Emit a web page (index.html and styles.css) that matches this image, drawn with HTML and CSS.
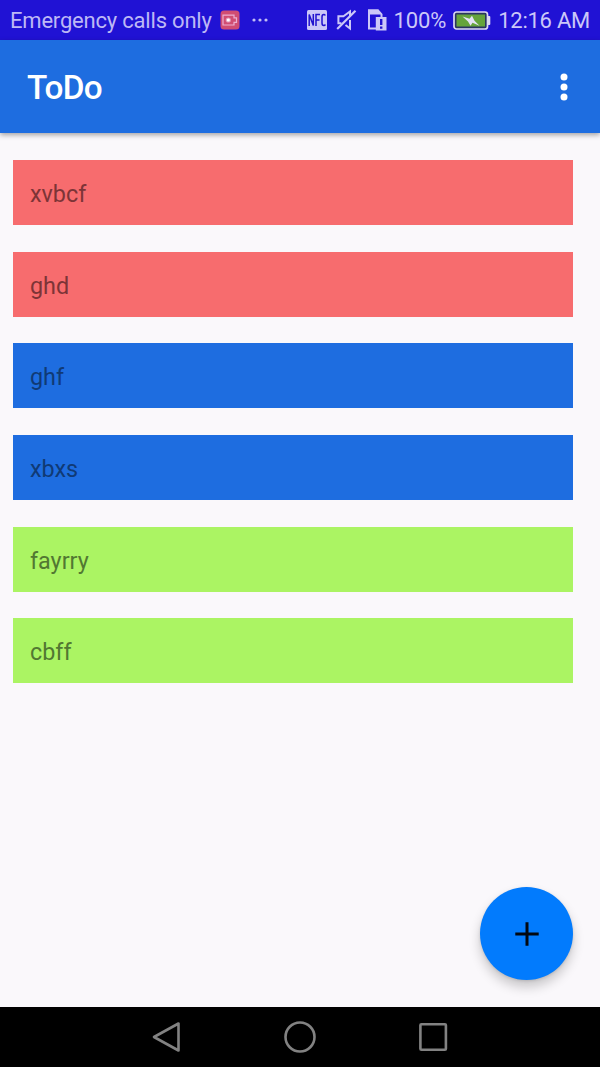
FILE: index.html
```html
<!DOCTYPE html>
<html lang="en">
<head>
<meta charset="utf-8">
<title>ToDo</title>
<link rel="stylesheet" href="styles.css">
</head>
<body>
<div class="screen">
  <div class="status-bar">
    <span class="carrier">Emergency calls only</span>
    <svg class="recorder" width="20" height="20" viewBox="0 0 20 20">
      <rect x=".5" y=".5" width="19" height="19" rx="3.5" fill="#d14d72"/>
      <path d="M3 5.2h11v2.6h2.5v4.6H14V15H3z" fill="none" stroke="#edafd0" stroke-width="1.2"/>
      <circle cx="8.3" cy="10" r="2.6" fill="#e29abb"/>
      <circle cx="8.3" cy="10" r="1.6" fill="#fff"/>
    </svg>
    <svg class="more" width="17" height="4" viewBox="0 0 17 4" fill="#c2bdf6">
      <circle cx="2" cy="2" r="1.6"/><circle cx="8" cy="2" r="1.6"/><circle cx="14" cy="2" r="1.6"/>
    </svg>
    <div class="indicators">
      <svg class="nfc" width="20" height="20" viewBox="0 0 20 20">
        <rect width="20" height="20" rx="1.5" fill="#cbc7f8"/>
        <path d="M2.2 16V4.5L6.3 15.5V4M9 16V4.6h4M9 10h3.5M18.3 5.5Q17.8 4.5 16.8 4.5Q15 4.5 15 7v6q0 2.5 1.8 2.5q1.2 0 1.5-1" fill="none" stroke="#2012ce" stroke-width="1.5"/>
      </svg>
      <svg class="muted" width="21" height="22" viewBox="0 0 21 22" fill="none" stroke="#cbc7f8" stroke-width="2">
        <path d="M8 7.2H2.4v7h3M7.5 7.2L14 2.5v4.5M14 11v8.5l-4.5-3.5"/>
        <path d="M1.2 20L19.5 1.7" stroke-width="2.2"/>
      </svg>
      <svg class="sim" width="20" height="22" viewBox="0 0 20 22">
        <path d="M9 19.4H2V1.5h9.5" fill="none" stroke="#cbc7f8" stroke-width="2"/>
        <path d="M1 .6h10.5L15.5 5v4h-2V5.5H1zM8.8 8H19.5v13.5H8.8z" fill="#cbc7f8"/>
        <path d="M13 10h2.4v6H13zM13 17.5h2.4v2.2H13z" fill="#2012ce"/>
      </svg>
      <span class="percent">100%</span>
      <svg class="battery" width="38" height="19" viewBox="0 0 38 19">
        <rect x="1" y="1" width="33.5" height="17" rx="2.5" fill="#2a3560" stroke="#dcdaf2" stroke-width="1.7"/>
        <rect x="3.5" y="3.5" width="28.5" height="12" fill="#65a43b"/>
        <path d="M35 5h1.3q1 0 1 1v7q0 1-1 1H35z" fill="#dcdaf2"/>
        <path d="M9.5 5.5l7 2.2 2.5-3 2.5 5 5 5-7-3-2 3-2.5-4.3z" fill="#e4e3f4"/>
      </svg>
      <span class="clock">12:16 AM</span>
    </div>
  </div>
  <header class="app-bar">
    <h1 class="title">ToDo</h1>
    <svg class="menu" width="8" height="28" viewBox="0 0 8 28" fill="#fff">
      <circle cx="4" cy="4" r="3.5"/><circle cx="4" cy="14" r="3.5"/><circle cx="4" cy="24" r="3.5"/>
    </svg>
  </header>
  <main class="content">
    <ul class="list">
      <li class="item high">xvbcf</li>
      <li class="item high">ghd</li>
      <li class="item medium">ghf</li>
      <li class="item medium">xbxs</li>
      <li class="item low">fayrry</li>
      <li class="item low">cbff</li>
    </ul>
    <button class="fab" aria-label="Add">
      <svg width="24" height="24" viewBox="0 0 24 24"><path d="M12 .3v23.4M.3 12h23.4" stroke="#020810" stroke-width="3"/></svg>
    </button>
  </main>
  <nav class="nav-bar">
    <svg width="32" height="34" viewBox="0 0 32 34"><path d="M27.5 3.5v27L3 17z"/></svg>
    <svg width="32" height="34" viewBox="0 0 32 34"><circle cx="16" cy="17" r="14.5"/></svg>
    <svg width="32" height="34" viewBox="0 0 32 34"><rect x="3.4" y="4.2" width="25.5" height="25.5" rx="1"/></svg>
  </nav>
</div>
</body>
</html>
```
FILE: styles.css
```css
* { box-sizing: border-box; }
body { margin: 0; font-family: Roboto, sans-serif; }
svg { display: block; flex: none; }

.screen {
  width: 600px;
  height: 1067px;
  display: flex;
  flex-direction: column;
  overflow: hidden;
  background: #faf8fb;
}

.status-bar {
  flex: none;
  height: 40px;
  padding: 0 10px;
  display: flex;
  align-items: center;
  background: #2012d4;
  color: #bdb8f5;
  font-size: 22px;
  line-height: 40px;
  white-space: nowrap;
}
.carrier { width: 210px; padding-top: 2px; letter-spacing: -.2px; }
.more { margin-left: 12px; }
.indicators { margin-left: auto; display: flex; align-items: center; color: #cbc7f8; }
.muted { margin-left: 9px; }
.sim { margin-left: 10px; }
.percent { margin-left: 6px; padding-top: 2px; letter-spacing: -.1px; }
.clock { padding-top: 2px; letter-spacing: -.25px; }
.battery { margin: 1px 7.5px 0 6.5px; }

.app-bar {
  flex: none;
  z-index: 1;
  height: 93px;
  padding: 0 32.5px 0 27px;
  display: flex;
  align-items: center;
  justify-content: space-between;
  background: #1e6de0;
  color: #fff;
  box-shadow: 0 2px 5px rgba(0, 0, 0, .35);
}
.title { margin: 3px 0 0; font-size: 33.3px; font-weight: 500; line-height: 40px; letter-spacing: -.6px; }

.content { flex: 1; position: relative; padding: 27px 26.7px 0 13.3px; }
.list {
  margin: 0;
  padding: 0;
  list-style: none;
  display: flex;
  flex-direction: column;
  gap: 26.67px;
}
.item {
  height: 65px;
  padding: 2px 16.7px 0;
  font-size: 23.33px;
  line-height: 64px;
}
.high { background: #f76c6e; color: #7d3437; }
.medium { background: #1e6de0; color: #103a75; }
.low { background: #abf463; color: #527832; }

.fab {
  position: absolute;
  right: 26.7px;
  bottom: 26.7px;
  width: 93.3px;
  height: 93.3px;
  padding: 0;
  border: 0;
  border-radius: 50%;
  display: flex;
  align-items: center;
  justify-content: center;
  background: #027bfd;
  box-shadow: 0 7px 12px rgba(0, 0, 0, .2), 0 1px 3px rgba(0, 0, 0, .12);
}

.nav-bar {
  flex: none;
  height: 60px;
  display: flex;
  align-items: center;
  justify-content: center;
  gap: 101.3px;
  background: #000;
  fill: none;
  stroke: #828282;
  stroke-width: 2.6;
  stroke-linejoin: round;
}
```
